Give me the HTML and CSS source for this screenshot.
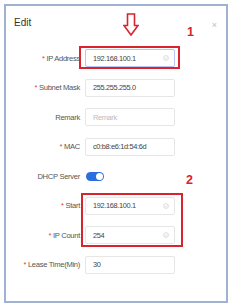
FILE: index.html
```html
<!DOCTYPE html>
<html lang="en">
<head>
    <meta charset="UTF-8">
    <title>Edit</title>
    <link rel="stylesheet" href="styles.css">
</head>
<body>
    <div class="dialog">
        <div class="dialog-header">
            <span class="dialog-title">Edit</span>
            <span class="dialog-close">&times;</span>
        </div>

        <div class="form">
            <div class="row">
                <label class="label"><span class="req">*</span> IP Address</label>
                <div class="input focused">
                    <span class="value">192.168.100.1</span>
                    <svg class="check" viewBox="0 0 10 10"><circle cx="5" cy="5" r="4" fill="none" stroke="#c4c4c4" stroke-width="1"/><path d="M3 5.2 L4.5 6.6 L7 3.8" fill="none" stroke="#c4c4c4" stroke-width="1"/></svg>
                </div>
            </div>
            <div class="row">
                <label class="label"><span class="req">*</span> Subnet Mask</label>
                <div class="input"><span class="value">255.255.255.0</span></div>
            </div>
            <div class="row">
                <label class="label">Remark</label>
                <div class="input"><span class="value placeholder">Remark</span></div>
            </div>
            <div class="row">
                <label class="label"><span class="req">*</span> MAC</label>
                <div class="input"><span class="value">c0:b8:e6:1d:54:6d</span></div>
            </div>
            <div class="row">
                <label class="label">DHCP Server</label>
                <span class="toggle"><span class="knob"></span></span>
            </div>
            <div class="row">
                <label class="label"><span class="req">*</span> Start</label>
                <div class="input">
                    <span class="value">192.168.100.1</span>
                    <svg class="check" viewBox="0 0 10 10"><circle cx="5" cy="5" r="4" fill="none" stroke="#c4c4c4" stroke-width="1"/><path d="M3 5.2 L4.5 6.6 L7 3.8" fill="none" stroke="#c4c4c4" stroke-width="1"/></svg>
                </div>
            </div>
            <div class="row">
                <label class="label"><span class="req">*</span> IP Count</label>
                <div class="input">
                    <span class="value">254</span>
                    <svg class="check" viewBox="0 0 10 10"><circle cx="5" cy="5" r="4" fill="none" stroke="#c4c4c4" stroke-width="1"/><path d="M3 5.2 L4.5 6.6 L7 3.8" fill="none" stroke="#c4c4c4" stroke-width="1"/></svg>
                </div>
            </div>
            <div class="row">
                <label class="label"><span class="req">*</span> Lease Time(Min)</label>
                <div class="input"><span class="value">30</span></div>
            </div>
        </div>

        <!-- red annotations drawn over the form -->
        <svg class="arrow" viewBox="0 0 16 23"><path d="M4.5 1 H11.5 V12.5 H15 L8 22 L1 12.5 H4.5 Z" fill="#fff" stroke="#d8242c" stroke-width="1.6" stroke-linejoin="miter"/></svg>
        <span class="mark mark-1">1</span>
        <span class="mark mark-2">2</span>
        <div class="highlight hl-1"></div>
        <div class="highlight hl-2"></div>
    </div>
</body>
</html>
```

FILE: styles.css
```css
body, html {
    margin: 0;
    padding: 0;
    background-color: #fff;
    font-family: "Liberation Sans", Arial, sans-serif;
}

.dialog {
    position: relative;
    margin: 4px 0 0 4px;
    width: 224px;
    height: 299px;
    box-sizing: border-box;
    border: 2px solid #9fb2d2;
    background-color: #fff;
}

.dialog-header {
    height: 43px;
    display: flex;
    justify-content: space-between;
    align-items: flex-start;
    padding: 11px 9px 0 8px;
    box-sizing: border-box;
}

.dialog-title {
    font-size: 10px;
    line-height: 12px;
    color: #333;
}

.dialog-close {
    font-size: 9px;
    line-height: 10px;
    color: #c0c0c0;
    margin-top: 3px;
}

.form {
    display: flex;
    flex-direction: column;
    gap: 11.5px;
}

.row {
    display: flex;
    align-items: center;
    height: 18px;
}

.label {
    width: 74px;
    text-align: right;
    margin-right: 5px;
    font-size: 7.6px;
    letter-spacing: -0.3px;
    color: #555;
    white-space: nowrap;
}

.req {
    color: #e8413c;
}

.input {
    width: 90px;
    height: 18px;
    box-sizing: border-box;
    border: 1px solid #e6e6e6;
    border-radius: 2px;
    display: flex;
    align-items: center;
    justify-content: space-between;
    padding: 0 5px 0 7px;
}

.input.focused {
    border-color: #b9c5f3;
}

.value {
    font-size: 7.4px;
    letter-spacing: -0.35px;
    color: #444;
    white-space: nowrap;
}

.value.placeholder {
    color: #bbb;
}

.check {
    width: 6px;
    height: 6px;
}

.toggle {
    position: relative;
    width: 18px;
    height: 9px;
    border-radius: 5px;
    background-color: #2c6de0;
    margin-left: 1px;
}

.knob {
    position: absolute;
    right: 1px;
    top: 1px;
    width: 7px;
    height: 7px;
    border-radius: 50%;
    background-color: #fff;
}

.arrow {
    position: absolute;
    left: 117px;
    top: 7px;
    width: 16px;
    height: 23px;
}

.mark {
    position: absolute;
    font-size: 12.5px;
    line-height: 1;
    font-weight: bold;
    color: #d8242c;
}

.mark-1 {
    left: 181px;
    top: 20px;
}

.mark-2 {
    left: 180px;
    top: 168px;
}

.highlight {
    position: absolute;
    box-sizing: border-box;
    border: 2px solid #d8242c;
}

.hl-1 {
    left: 73px;
    top: 40px;
    width: 101px;
    height: 23px;
}

.hl-2 {
    left: 75px;
    top: 187px;
    width: 102px;
    height: 54px;
}
```
